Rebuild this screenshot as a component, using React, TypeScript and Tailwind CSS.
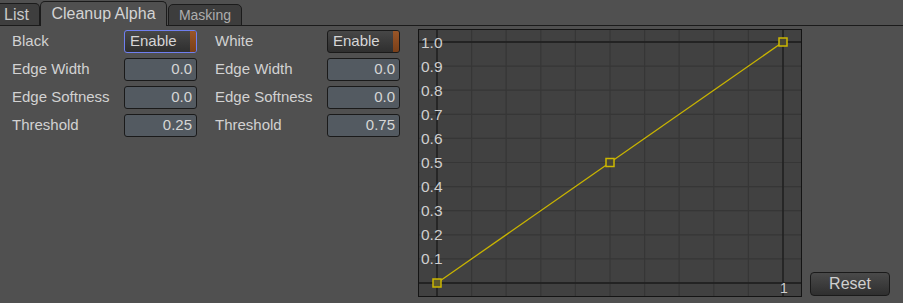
import React from "react";

const font = { fontFamily: '"Liberation Sans", Arial, sans-serif' };

function Field({ value }: { value: string }) {
  return (
    <div className="w-[73px] h-[23px] rounded-[3px] border border-[#1a1a1a] bg-[#535a61] flex items-center justify-end pr-[4px] text-[15px] text-[#d6d6d6]">
      {value}
    </div>
  );
}

function EnableButton({ focused }: { focused?: boolean }) {
  return (
    <div
      className={
        "w-[73px] h-[23px] rounded-[3px] border flex overflow-hidden bg-gradient-to-b from-[#474747] to-[#2f2f2f] " +
        (focused ? "border-[#6f7ff0]" : "border-[#1a1a1a]")
      }
    >
      <div className="flex-1 flex items-center pl-[5px] text-[15px] text-[#d6d6d6]">Enable</div>
      <div className="w-[6px] bg-gradient-to-b from-[#9a5628] to-[#7a3f18]" />
    </div>
  );
}

function Label({ text, indent }: { text: string; indent?: boolean }) {
  return (
    <div
      className={
        "h-[23px] flex items-center whitespace-nowrap text-[15px] text-[#d2d2d2] " + (indent ? "pl-[18px]" : "")
      }
    >
      {text}
    </div>
  );
}

function Curve() {
  const x0 = 18;
  const y0 = 12;
  const dx = 34.6;
  const dy = 24.1;
  const cols = Array.from({ length: 13 }, (_, i) => x0 + dx * (i - 1));
  const rows = Array.from({ length: 13 }, (_, i) => y0 + dy * (i - 1));
  const labels = ["1.0", "0.9", "0.8", "0.7", "0.6", "0.5", "0.4", "0.3", "0.2", "0.1"];
  const xEnd = x0 + dx * 10;
  const yEnd = y0 + dy * 10;
  const pts = [
    [x0, yEnd],
    [(x0 + xEnd) / 2, (y0 + yEnd) / 2],
    [xEnd, y0],
  ];
  return (
    <svg width="382" height="266" className="block">
      <rect width="382" height="266" fill="#414141" />
      {cols.map((x, i) => (
        <line key={"c" + i} x1={x} x2={x} y1={0} y2={266} stroke="#363636" strokeWidth="1.2" />
      ))}
      {rows.map((y, i) => (
        <line key={"r" + i} x1={0} x2={382} y1={y} y2={y} stroke="#363636" strokeWidth="1.2" />
      ))}
      <line x1={x0} x2={x0} y1={0} y2={266} stroke="#1d1d1d" strokeWidth="1.3" />
      <line x1={xEnd} x2={xEnd} y1={0} y2={266} stroke="#1d1d1d" strokeWidth="1.3" />
      <line x1={0} x2={382} y1={y0} y2={y0} stroke="#1d1d1d" strokeWidth="1.3" />
      <line x1={0} x2={382} y1={yEnd} y2={yEnd} stroke="#1d1d1d" strokeWidth="1.3" />
      {labels.map((t, i) => (
        <text
          key={t}
          x={2}
          y={y0 + dy * i + 5.5}
          fill="#cfcfcf"
          fontSize="15.5"
          fontFamily="Liberation Sans, Arial, sans-serif"
        >
          {t}
        </text>
      ))}
      <text x={361} y={263} fill="#cfcfcf" fontSize="14" fontFamily="Liberation Sans, Arial, sans-serif">
        1
      </text>
      <line x1={x0} y1={yEnd} x2={xEnd} y2={y0} stroke="#c9b400" strokeWidth="1.3" />
      {pts.map(([x, y], i) => (
        <rect
          key={i}
          x={x - 4}
          y={y - 4}
          width="8"
          height="8"
          fill={i === 0 ? "#5e5a2e" : "#474536"}
          stroke="#cdb800"
          strokeWidth="1.5"
        />
      ))}
    </svg>
  );
}

export default function App() {
  return (
    <div className="w-[903px] h-[303px] bg-[#505050] flex flex-col overflow-hidden" style={font}>
      {/* tabs */}
      <div className="h-[26px] flex items-end border-b border-[#1b1b1b] shrink-0">
        <div className="w-[40px] h-[23px] rounded-tr-[5px] border border-l-0 border-[#1b1b1b] bg-[#3e3e3e] -mb-px flex items-center pl-[4px] text-[16px] text-[#c9c9c9]">
          List
        </div>
        <div className="w-[127px] h-[25px] rounded-t-[5px] border border-b-0 border-[#1b1b1b] bg-[#505050] -mb-px pb-px flex items-center justify-center text-[16px] text-[#d4d4d4]">
          Cleanup Alpha
        </div>
        <div className="ml-[1px] w-[74px] h-[22px] rounded-t-[5px] border border-[#1b1b1b] bg-[#3d3d3d] -mb-px flex items-center justify-center text-[14px] text-[#adadad]">
          Masking
        </div>
      </div>

      {/* body */}
      <div className="flex flex-1 pt-[3px]">
        <div className="pl-[12px] pt-[1px] grid grid-cols-[112px_73px_130px_73px] gap-y-[5px] h-fit">
          <Label text="Black" />
          <EnableButton focused />
          <Label text="White" indent />
          <EnableButton />

          <Label text="Edge Width" />
          <Field value="0.0" />
          <Label text="Edge Width" indent />
          <Field value="0.0" />

          <Label text="Edge Softness" />
          <Field value="0.0" />
          <Label text="Edge Softness" indent />
          <Field value="0.0" />

          <Label text="Threshold" />
          <Field value="0.25" />
          <Label text="Threshold" indent />
          <Field value="0.75" />
        </div>

        <div className="ml-[18px] w-[384px] h-[268px] border border-[#141414]">
          <Curve />
        </div>

        <div className="flex-1 flex items-end pl-[8px] pb-[7px]">
          <div className="w-[80px] h-[24px] rounded-[4px] border border-[#1a1a1a] bg-gradient-to-b from-[#4a4a4a] to-[#2f2f2f] flex items-center justify-center text-[16px] text-[#cfcfcf]">
            Reset
          </div>
        </div>
      </div>
    </div>
  );
}
